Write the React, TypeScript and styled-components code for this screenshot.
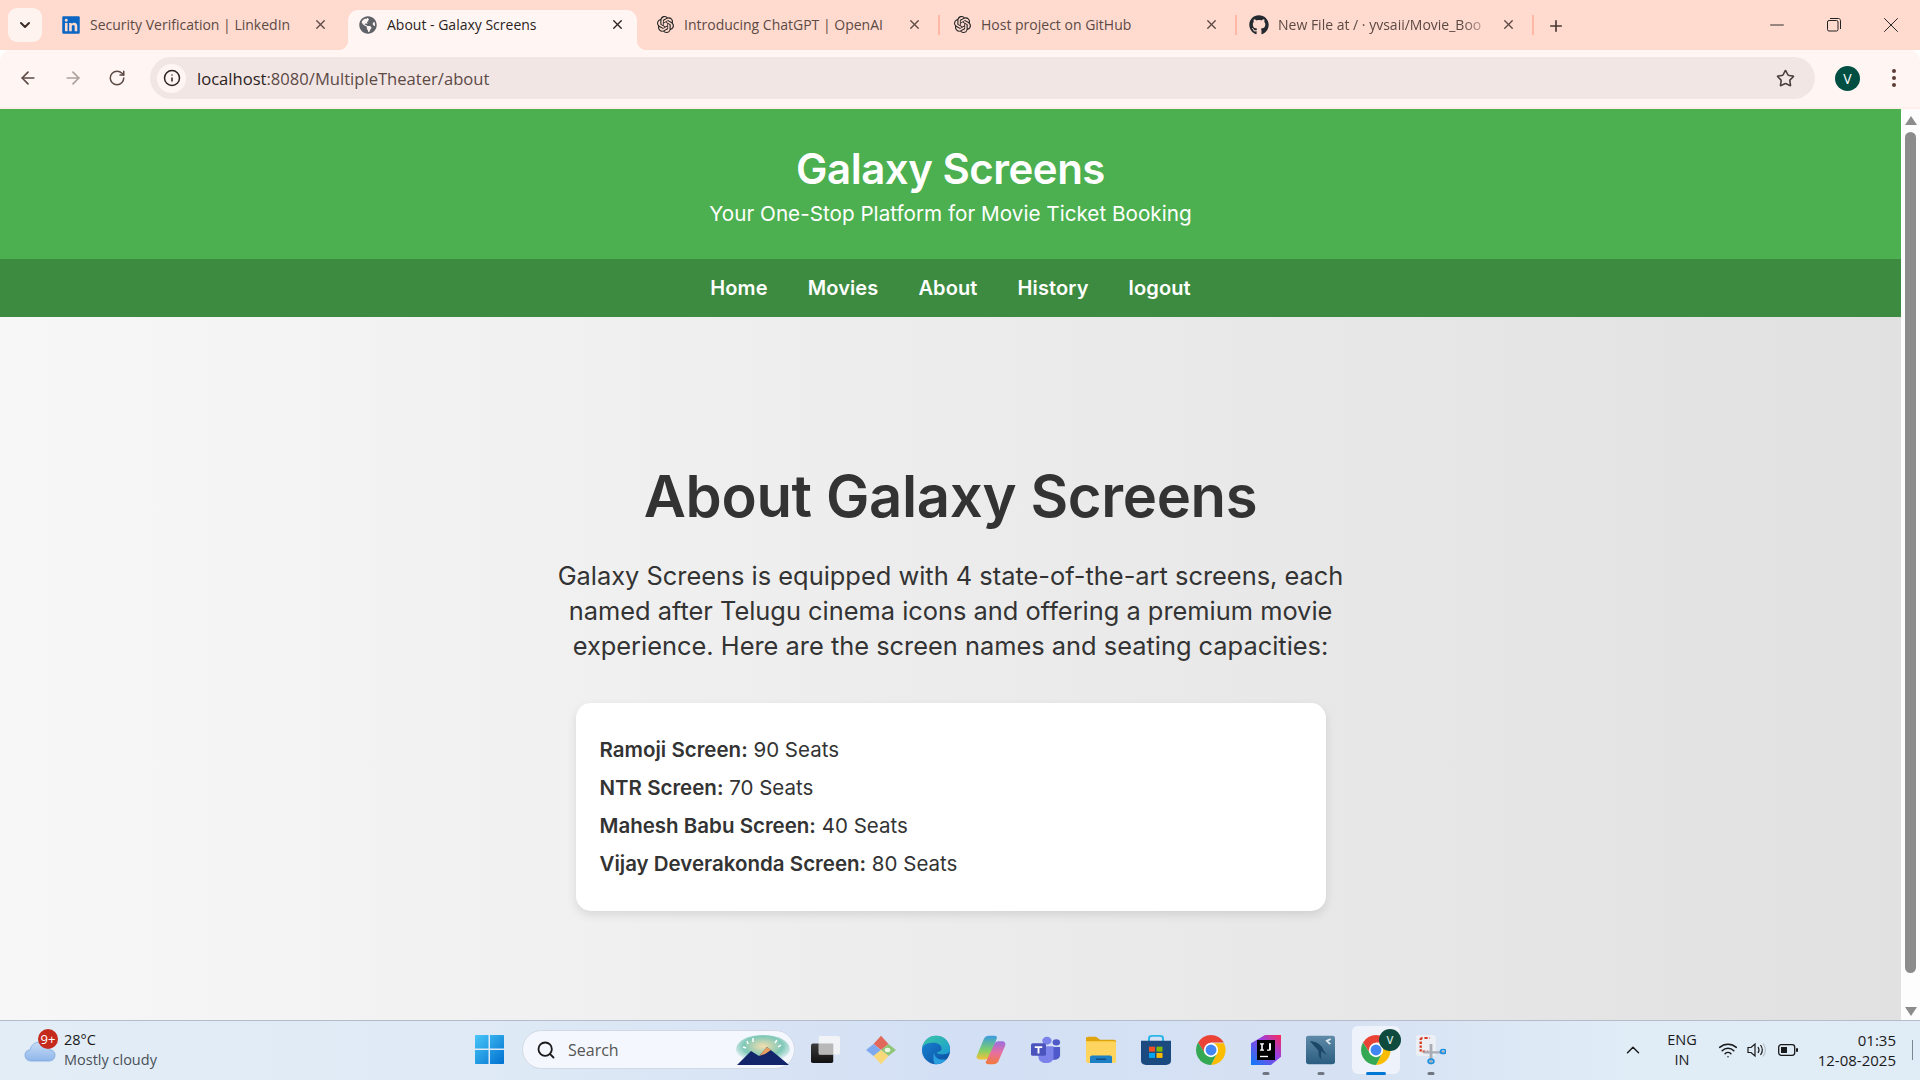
import React from "react";
import styled, { createGlobalStyle } from "styled-components";
import { ArrowLeft, ArrowRight, RotateCw, Info, X, Plus, Star, ChevronDown, ChevronUp, Search, Wifi, Minus } from "lucide-react";
import { FaGithub, FaLinkedin, FaGlobeAmericas } from "react-icons/fa";
import { SiOpenai } from "react-icons/si";

const GlobalStyle = createGlobalStyle`
  html, body { margin: 0; padding: 0; overflow: hidden; }
  * { box-sizing: border-box; }
`;
const chromeFont = `"Open Sans", "Noto Sans", sans-serif`;
const pageFont = `Inter, "Noto Sans", sans-serif`;

const Screen = styled.div`
  width: 1920px; height: 1080px; display: flex; flex-direction: column; overflow: hidden;
  font-family: ${chromeFont};
`;
const TabStrip = styled.div`
  height: 50px; background: #ffdacf; display: flex; align-items: flex-end; position: relative; padding-left: 8px;
`;
const CollapseButton = styled.div`
  width: 34px; height: 34px; margin-bottom: 8px; margin-right: 9px; border-radius: 9px; background: #fff3ef;
  display: flex; align-items: center; justify-content: center; color: #3c2a25;
`;
const Tab = styled.div<{ $active?: boolean }>`
  width: 289px; height: 40px; margin-right: 8px; position: relative; display: flex; align-items: center;
  padding-left: 10px; padding-bottom: 11px;
  border-radius: 10px 10px 0 0; color: ${(p) => (p.$active ? "#2b2321" : "#5c4a45")};
  background: ${(p) => (p.$active ? "#fff6f4" : "transparent")};
  ${(p) => !p.$active && `
    &::after { content: ""; position: absolute; right: -6px; top: 5px; width: 2px; height: 20px; background: #ffb8a4; }
  `}
  ${(p) => p.$active && `
    &::before, &::after { content: ""; position: absolute; bottom: 0; width: 10px; height: 10px; }
    &::before { left: -10px; background: radial-gradient(circle at 0 0, transparent 10px, #fff6f4 10.5px); }
    &::after { right: -10px; background: radial-gradient(circle at 100% 0, transparent 10px, #fff6f4 10.5px); }
  `}
`;
const FirstTab = styled(Tab)`
  &::after { display: none; }
`;
const Favicon = styled.span`
  width: 20px; height: 20px; display: flex; align-items: center; justify-content: center; flex: none; margin-right: 9px;
`;
const TabTitle = styled.span<{ $fade?: boolean }>`
  flex: 1; font-size: 14px; white-space: nowrap; min-width: 0;
  ${(p) => p.$fade && `-webkit-mask-image: linear-gradient(90deg,#000 85%,transparent);`}
`;
const TabClose = styled.span`
  width: 16px; height: 16px; margin-right: 12px; margin-left: 6px; flex: none; display: flex; align-items: center; justify-content: center;
`;
const NewTab = styled.span`
  width: 20px; margin-left: 10px; margin-bottom: 14px; height: 20px; display: flex; align-items: center; justify-content: center; color: #4a3833;
`;
const WindowControls = styled.div`
  margin-left: auto; display: flex; align-items: center; height: 50px; align-self: flex-start; padding-right: 1px;
`;
const WindowButton = styled.span`
  width: 57px; height: 50px; display: flex; align-items: center; justify-content: center; color: #222;
`;
const Toolbar = styled.div`
  height: 59px; background: #fff6f4; border-radius: 10px 10px 0 0; padding: 8px 0 9px 0; display: flex; align-items: center; border-bottom: 2px solid #ffeee9;
`;
const NavIcons = styled.div`
  display: flex; align-items: center; width: 150px; padding-left: 18px; gap: 25px; color: #5c4a45;
`;
const UrlBar = styled.div`
  width: 1665px; height: 42px; border-radius: 21px; background: #f2e6e5; display: flex; align-items: center; padding-left: 7px; padding-right: 20px;
`;
const InfoPill = styled.span`
  width: 29px; height: 29px; border-radius: 50%; background: #fff6f4; display: flex; align-items: center; justify-content: center; margin-right: 11px; color: #2b2321;
`;
const UrlText = styled.span`
  font-size: 16.6px; color: #2b2321; flex: 1;
  & > em { font-style: normal; color: #5c4a45; }
`;
const Avatar = styled.span`
  width: 25px; height: 25px; border-radius: 50%; background: #004f42; color: #fff; font-size: 14px; display: flex; align-items: center; justify-content: center; margin-left: 20px;
`;
const MenuDots = styled.span`
  display: flex; flex-direction: column; gap: 3px; margin-left: 32px;
  & > i { display: block; width: 4px; height: 4px; border-radius: 50%; background: #5c3c34; }
`;
const Viewport = styled.div`
  height: 912px; display: flex; border-bottom: 1px solid #b4bccb;
`;
const Content = styled.div`
  flex: 1; min-width: 0; display: flex; flex-direction: column;
  font-family: ${pageFont}; color: #333;
`;
const Header = styled.header`
  height: 150px; background: #4caf50; color: #fff; text-align: center; padding-top: 31px;
`;
const Title = styled.h1`
  margin: 0; font-size: 42px; line-height: 58px; font-weight: 600; letter-spacing: -0.5px;
`;
const Subtitle = styled.p`
  margin: 2px 0 0; font-size: 20.7px; line-height: 28px; font-weight: 400;
`;
const NavBar = styled.nav`
  height: 58px; background: #3d8b40; display: flex; align-items: center; justify-content: center; gap: 40px;
`;
const NavLink = styled.a`
  color: #fff; font-size: 20px; font-weight: 600; letter-spacing: 0.12px;
`;
const Main = styled.main`
  flex: 1; display: flex; flex-direction: column; align-items: center; padding-top: 146px;
  background: linear-gradient(90deg, #f7f7f7, #e1e1e1);
`;
const Heading = styled.h2`
  margin: 0; font-size: 58px; line-height: 67px; font-weight: 600; letter-spacing: -0.35px; color: #333;
`;
const Lead = styled.p`
  margin: 28px 0 0; width: 810px; text-align: center; font-size: 25.4px; line-height: 35px; font-weight: 400; color: #333;
`;
const Card = styled.div`
  margin-top: 40px; width: 750px; height: 208px; background: #fff; border-radius: 15px; padding: 28px 24px; box-shadow: 0 4px 10px rgba(0,0,0,.1);
`;
const Row = styled.div`
  font-size: 20.5px; line-height: 38px; color: #333;
  & > b { font-weight: 600; }
`;
const Scrollbar = styled.div`
  width: 19px; background: #fdfdfd; display: flex; flex-direction: column; align-items: center; padding: 7px 0 4px;
`;
const ScrollThumb = styled.div`
  width: 11px; flex: 1; margin: 7px 0 34px; background: #8c8c8c; border-radius: 6px;
`;
const Arrow = styled.div<{ $down?: boolean }>`
  width: 0; height: 0; border-left: 6px solid transparent; border-right: 6px solid transparent;
  ${(p) => (p.$down ? "border-top: 9px solid #8c8c8c;" : "border-bottom: 9px solid #8c8c8c;")}
`;
const Taskbar = styled.div`
  height: 59px; display: flex; align-items: center; padding-left: 24px; padding-bottom: 2px; font-family: ${chromeFont};
  background: linear-gradient(90deg, #e2edf6 0%, #dfeaf6 25%, #d3dff4 50%, #d6e2f3 70%, #e0ecf6 85%, #e0ecf6 100%);
`;
const Weather = styled.div`
  width: 451px; display: flex; align-items: center; gap: 8px; position: relative;
`;
const Badge = styled.span`
  position: absolute; left: 14px; top: -1px; width: 20px; height: 20px; border-radius: 50%; background: #c42b1c; color: #fff; font-size: 13px; display: flex; align-items: center; justify-content: center;
`;
const WeatherText = styled.div`
  font-size: 14.5px; line-height: 20px; color: #1a1a1a;
  & > span { display: block; color: #4a5058; }
`;
const SearchPill = styled.div`
  margin-left: 18px; margin-right: 3px; width: 273px; height: 39px; border-radius: 20px; background: #f4f7fd; border: 1px solid #d2d9e6; display: flex; align-items: center; padding-left: 13px; position: relative; color: #1a1a1a;
`;
const SearchLabel = styled.span`
  font-size: 16px; color: #555; margin-left: 12px; flex: 1;
`;
const TaskButton = styled.div<{ $active?: boolean; $running?: boolean }>`
  width: 55px; height: 48px; position: relative; display: flex; align-items: center; justify-content: center; border-radius: 6px;
  ${(p) => p.$active && `
    &::before { content: ""; position: absolute; left: 3.5px; right: 3.5px; top: 0; bottom: 0; background: #eef3fb; border-radius: 6px; }
  `}
  & > svg { position: relative; }
  ${(p) => (p.$running || p.$active) && `
    &::after { content: ""; position: absolute; left: 50%; bottom: -1px; height: 3px; border-radius: 2px; transform: translateX(-50%);
      width: ${p.$active ? "20px" : "7px"}; background: ${p.$active ? "#0078d4" : "#6f7681"}; }
  `}
`;
const ProfileBubble = styled.span`
  position: absolute; right: 2px; top: 3px; width: 22px; height: 22px; border-radius: 50%; background: #0e4a3e; color: #cfe3dc; font-size: 11px; font-weight: 600; display: flex; align-items: center; justify-content: center;
`;
const Tray = styled.div`
  margin-left: auto; display: flex; align-items: center; color: #1a1a1a; padding-right: 7px;
`;
const Lang = styled.div`
  width: 40px; font-size: 14.5px; line-height: 20px; text-align: center; margin-left: 18px; margin-right: 16px;
`;
const TrayIcons = styled.div`
  display: flex; align-items: center; gap: 9px;
`;
const Clock = styled.div`
  font-size: 15px; line-height: 20px; text-align: right; margin-left: 8px; width: 90px;
`;
const DesktopPeek = styled.span`
  width: 1px; height: 20px; background: #7d8694; margin-left: 16px;
`;

const ChromeIcon = () => (
  <svg width="30" height="30" viewBox="2 2 44 44">
    <path d="M43.05 13H24L15.34 29 4.95 13A22 22 0 0 1 43.05 13z" fill="#ea4335" />
    <path d="M24 46 32.66 29 24 14H43.05A22 22 0 0 1 24 46z" fill="#fbbc04" />
    <path d="M4.95 13 15.34 29H32.66L24 46A22 22 0 0 1 4.95 13z" fill="#34a853" />
    <circle cx="24" cy="24" r="10.500" fill="#fff" />
    <circle cx="24" cy="24" r="8" fill="#4285f4" />
  </svg>
);
const Icons = {
  TaskView: () => (
    <svg width="29" height="27" viewBox="0 0 30 32" preserveAspectRatio="none">
      <defs><linearGradient id="tv" x1="0" y1="0" x2="0" y2="1"><stop offset="0" stopColor="#3c3c3c" /><stop offset="1" stopColor="#111" /></linearGradient></defs>
      <rect x="0" y="9" width="23" height="23" rx="2" fill="url(#tv)" />
      <rect x="8" y="0" width="22" height="22" rx="2" fill="#f6f6f6" opacity=".85" />
      <rect x="8" y="9" width="15" height="13" fill="#b8b8b8" />
    </svg>
  ),
  Gem: () => (
    <svg width="30" height="30" viewBox="0 0 32 40" preserveAspectRatio="none">
      <path d="M16 1 24 12 16 20 8 12z" fill="#e2685c" />
      <path d="M24 12 32 20 24 28 16 20z" fill="#8fc678" />
      <path d="M8 12 16 20 8 28 0 20z" fill="#7fa9ee" />
      <path d="M16 20 24 28 16 39 8 28z" fill="#f8d878" />
      <circle cx="23" cy="20" r="3" fill="#eaf4e2" />
    </svg>
  ),
  Edge: () => (
    <svg width="30" height="30" viewBox="0 0 32 42" preserveAspectRatio="none">
      <defs>
        <linearGradient id="eg" x1="0" y1="0" x2="1" y2="1"><stop offset="0" stopColor="#3bc9a0" /><stop offset="1" stopColor="#1c9ad6" /></linearGradient>
        <linearGradient id="eb" x1="0" y1="0" x2="1" y2="1"><stop offset="0" stopColor="#1a86d8" /><stop offset="1" stopColor="#0c4e9e" /></linearGradient>
      </defs>
      <ellipse cx="16" cy="21" rx="15" ry="20" fill="url(#eb)" />
      <path d="M1 19C3 6 10 1 16 1c9 0 15 8 15 20 0 4-3 6-8 6-4 0-6-1-6-3 3 0 5-2 5-5 0-5-5-9-10-8-6 0-10 4-11 8z" fill="url(#eg)" />
      <path d="M14 24c0 7 5 12 13 10-3 5-7 7-11 7-2 0-4-7-2-17z" fill="#2a9fe0" />
    </svg>
  ),
  Copilot: () => (
    <svg width="30" height="30" viewBox="0 0 32 38" preserveAspectRatio="none">
      <defs>
        <linearGradient id="c1" x1="0" y1="0" x2="0" y2="1"><stop offset="0" stopColor="#3a9be0" /><stop offset=".6" stopColor="#7fcf6a" /><stop offset="1" stopColor="#f5c23a" /></linearGradient>
        <linearGradient id="c2" x1="0" y1="0" x2="0" y2="1"><stop offset="0" stopColor="#9a6fe0" /><stop offset=".5" stopColor="#e86fa0" /><stop offset="1" stopColor="#f27a3a" /></linearGradient>
      </defs>
      <path d="M14 1h6c2 0 3 2 2 4l-7 22c-1 2-3 4-5 4H4c-3 0-4-3-3-5L8 6c1-3 3-5 6-5z" fill="url(#c1)" />
      <path d="M24 8h4c3 0 4 3 3 6l-7 19c-1 3-3 4-6 4h-5c-3 0-3-3-2-4l8-20c1-3 3-5 5-5z" fill="url(#c2)" />
    </svg>
  ),
  Teams: () => (
    <svg width="30" height="27" viewBox="0 0 32 34" preserveAspectRatio="none">
      <circle cx="17" cy="6" r="5" fill="#7b83eb" /><circle cx="27" cy="8" r="4" fill="#5059c9" />
      <path d="M20 14h11v10c0 4-3 6-6 6h-5z" fill="#5059c9" />
      <path d="M8 13h16v14c0 4-3 7-8 7-4 0-8-3-8-7z" fill="#7b83eb" />
      <rect x="0" y="9" width="16" height="16" rx="2" fill="#4b53bc" />
      <path d="M4 13h8v2H9v7H7v-7H4z" fill="#fff" />
    </svg>
  ),
  Folder: () => (
    <svg width="30" height="27" viewBox="0 0 30 36" preserveAspectRatio="none">
      <path d="M0 3c0-1 1-2 2-2h8l4 4h14c1 0 2 1 2 2v6H0z" fill="#dfa40c" />
      <path d="M0 7h28c1 0 2 1 2 2v25c0 1-1 2-2 2H2c-1 0-2-1-2-2z" fill="#fdd45d" />
      <path d="M4 36v-8c0-1 1-2 2-2h18c1 0 2 1 2 2v8z" fill="#1d7fc4" />
      <rect x="10" y="30" width="10" height="2" fill="#0d4f86" />
    </svg>
  ),
  Store: () => (
    <svg width="30" height="30" viewBox="0 0 30 36" preserveAspectRatio="none">
      <path d="M8 8V4c0-2 1-3 3-3h8c2 0 3 1 3 3v4" fill="none" stroke="#29b6e8" strokeWidth="2" />
      <path d="M0 7h30v24c0 3-2 5-5 5H5c-3 0-5-2-5-5z" fill="#1b4a80" />
      <rect x="8" y="14" width="6" height="6" fill="#f25022" /><rect x="15.500" y="14" width="6" height="6" fill="#7fba00" />
      <rect x="8" y="21.500" width="6" height="6" fill="#00a4ef" /><rect x="15.500" y="21.500" width="6" height="6" fill="#ffb900" />
    </svg>
  ),
  IntelliJ: () => (
    <svg width="30" height="30" viewBox="0 0 30 36" preserveAspectRatio="none">
      <defs><linearGradient id="ij" x1="0" y1="1" x2="1" y2="0"><stop offset="0" stopColor="#087cfa" /><stop offset=".6" stopColor="#9b3fe0" /><stop offset="1" stopColor="#fe2857" /></linearGradient></defs>
      <path d="M0 10 14 0h16v26l-10 10H0z" fill="url(#ij)" />
      <rect x="6" y="6" width="18" height="24" fill="#000" />
      <path d="M9 10h4v1.500h-1.200v6H13V19H9v-1.500h1.200v-6H9zM16 10h4v7c0 1.500-1 2-2 2h-2v-1.500h2v-7.500h-2z" fill="#fff" />
      <rect x="9" y="25" width="8" height="1.600" fill="#fff" />
    </svg>
  ),
  MySql: () => (
    <svg width="29" height="30" viewBox="0 0 30 38" preserveAspectRatio="none">
      <defs><linearGradient id="ms" x1="0" y1="0" x2="0" y2="1"><stop offset="0" stopColor="#5f8aa8" /><stop offset="1" stopColor="#2b5d80" /></linearGradient></defs>
      <rect x="0" y="1" width="30" height="36" rx="3" fill="url(#ms)" />
      <path d="M4 8c6 0 10 3 13 8 1 3 2 6 5 9-3-1-5-3-6-5 0 4-1 8 0 11-3-3-3-7-3-11C10 16 7 12 4 8z" fill="#1d4766" />
      <path d="M20 7l5-3 1 2-3 2 3 3-2 1z" fill="#dfe8ee" />
    </svg>
  ),
  Snip: () => (
    <svg width="30" height="30" viewBox="0 0 32 40" preserveAspectRatio="none">
      <rect x="0" y="0" width="21" height="28" rx="3" fill="#eceff4" />
      <path d="M5 12V6c0-1 1-2 2-2h8" fill="none" stroke="#d83b20" strokeWidth="2.500" strokeDasharray="3.500 2" />
      <path d="M5 14v8h8" fill="none" stroke="#d83b20" strokeWidth="2.500" strokeDasharray="3 2" />
      <path d="M16 12v27M8 23h24" stroke="#a8adb5" strokeWidth="3" />
      <circle cx="16" cy="35" r="3" fill="none" stroke="#1b8fe0" strokeWidth="2" />
      <circle cx="29" cy="22" r="2.800" fill="none" stroke="#1b8fe0" strokeWidth="2" />
    </svg>
  ),
};
const WinLogo = () => (
  <svg width="29" height="29" viewBox="0 0 29 29" style={{ flex: "none" }}>
    <defs><linearGradient id="wl" x1="0" y1="0" x2="1" y2="1"><stop offset="0" stopColor="#48c6f7" /><stop offset="1" stopColor="#0070d0" /></linearGradient></defs>
    <path d="M0 1c0-.6.4-1 1-1h12.500v13.500H0zM15 0h13c.6 0 1 .4 1 1v12.500H15zM0 15h13.500v14H1c-.6 0-1-.4-1-1zM15 15h14v13c0 .6-.4 1-1 1H15z" fill="url(#wl)" />
  </svg>
);
const SearchArt = () => (
  <svg width="56" height="30" viewBox="0 0 56 30" style={{ marginRight: 3 }}>
    <defs>
      <radialGradient id="sk" cx=".5" cy=".4" r=".6"><stop offset="0" stopColor="#f3dfae" /><stop offset=".6" stopColor="#7ec8b8" /><stop offset="1" stopColor="#f4f7fd" /></radialGradient>
    </defs>
    <ellipse cx="28" cy="14" rx="27" ry="14" fill="url(#sk)" />
    <path d="M2 30 16 16l8 5 8-9 10 8 12 10z" fill="#12246a" />
    <path d="M24 21l8-9 4 3-6 4z" fill="#e8a060" />
    <path d="M12 6l1 3M18 3v4M8 12l3 1M42 5l-2 3M46 10l-3 2" stroke="#fff" strokeWidth="1.500" />
  </svg>
);
const Cloud = () => (
  <svg width="32" height="24" viewBox="0 0 32 24">
    <defs><linearGradient id="cl" x1="0" y1="0" x2="0" y2="1"><stop offset="0" stopColor="#c8dcf6" /><stop offset="1" stopColor="#8fb6ea" /></linearGradient></defs>
    <path d="M20 4c2 0 4 1 4 3l-2 2z" fill="#f08a24" />
    <path d="M7 23c-4 0-6-3-6-6s2-5 5-5c1-5 5-8 10-8 5 0 9 3 10 8 3 0 5 2 5 5s-2 6-6 6z" fill="url(#cl)" stroke="#7ea8de" strokeWidth=".8" />
  </svg>
);
const Speaker = () => (
  <svg width="22" height="16" viewBox="0 0 22 16" fill="none" stroke="#1a1a1a" strokeWidth="1.200">
    <path d="M1 5.500h3l4-3.500v12l-4-3.500H1z" /><path d="M11 5c1.200 1.800 1.200 4.200 0 6M13.500 3c2.200 3 2.200 7 0 10" /><path d="M16 1.500c3 4 3 9 0 13" stroke="#b9c2cc" />
  </svg>
);
const Battery = () => (
  <svg width="20" height="14" viewBox="0 0 20 14">
    <rect x=".7" y="1.700" width="16" height="10.600" rx="2.500" fill="none" stroke="#1a1a1a" strokeWidth="1.300" />
    <rect x="3" y="4" width="6" height="6" fill="#1a1a1a" /><rect x="18" y="5" width="2" height="4" rx="1" fill="#1a1a1a" />
  </svg>
);
const RestoreIcon = () => (
  <svg width="14" height="14" viewBox="0 0 14 14" fill="none" stroke="#222" strokeWidth="1">
    <rect x=".5" y="2.500" width="10.500" height="10.500" rx="1.500" /><path d="M3 .5h8.500c1 0 2 1 2 2V11" />
  </svg>
);

const tabs = [
  { title: "Security Verification | LinkedIn", icon: <FaLinkedin size={20} color="#0a66c2" /> },
  { title: "About - Galaxy Screens", icon: <FaGlobeAmericas size={18} color="#5f6368" />, active: true },
  { title: "Introducing ChatGPT | OpenAI", icon: <SiOpenai size={17} color="#222" /> },
  { title: "Host project on GitHub", icon: <SiOpenai size={17} color="#222" /> },
  { title: "New File at / · yvsaii/Movie_Boo", icon: <FaGithub size={20} color="#24292f" />, fade: true },
];
const screens = [
  ["Ramoji Screen:", "90 Seats"],
  ["NTR Screen:", "70 Seats"],
  ["Mahesh Babu Screen:", "40 Seats"],
  ["Vijay Deverakonda Screen:", "80 Seats"],
];

export default function App() {
  return (
    <Screen>
      <GlobalStyle />
      <TabStrip>
        <CollapseButton><ChevronDown size={16} strokeWidth={3} /></CollapseButton>
        {tabs.map((t, i) => {
          const T = i === 0 ? FirstTab : Tab;
          return (
            <T key={t.title} $active={t.active}>
              <Favicon>{t.icon}</Favicon>
              <TabTitle $fade={t.fade}>{t.title}</TabTitle>
              <TabClose><X size={15} strokeWidth={2.2} /></TabClose>
            </T>
          );
        })}
        <NewTab><Plus size={18} strokeWidth={2.2} /></NewTab>
        <WindowControls>
          <WindowButton><Minus size={22} strokeWidth={1} /></WindowButton>
          <WindowButton><RestoreIcon /></WindowButton>
          <WindowButton><X size={26} strokeWidth={0.9} /></WindowButton>
        </WindowControls>
      </TabStrip>
      <Toolbar>
        <NavIcons>
          <ArrowLeft size={20} />
          <ArrowRight size={20} opacity={0.5} />
          <RotateCw size={18} />
        </NavIcons>
        <UrlBar>
          <InfoPill><Info size={18} strokeWidth={2} /></InfoPill>
          <UrlText>localhost<em>:8080/MultipleTheater/about</em></UrlText>
          <Star size={19} color="#4a3e3b" strokeWidth={2} />
        </UrlBar>
        <Avatar>V</Avatar>
        <MenuDots><i /><i /><i /></MenuDots>
      </Toolbar>
      <Viewport>
        <Content>
          <Header>
            <Title>Galaxy Screens</Title>
            <Subtitle>Your One-Stop Platform for Movie Ticket Booking</Subtitle>
          </Header>
          <NavBar>
            {["Home", "Movies", "About", "History", "logout"].map((n) => <NavLink key={n}>{n}</NavLink>)}
          </NavBar>
          <Main>
            <Heading>About Galaxy Screens</Heading>
            <Lead>Galaxy Screens is equipped with 4 state-of-the-art screens, each named after Telugu cinema icons and offering a premium movie experience. Here are the screen names and seating capacities:</Lead>
            <Card>
              {screens.map(([a, b]) => <Row key={a}><b>{a}</b> {b}</Row>)}
            </Card>
          </Main>
        </Content>
        <Scrollbar>
          <Arrow />
          <ScrollThumb />
          <Arrow $down />
        </Scrollbar>
      </Viewport>
      <Taskbar>
        <Weather>
          <Cloud />
          <Badge>9+</Badge>
          <WeatherText>28°C<span>Mostly cloudy</span></WeatherText>
        </Weather>
        <WinLogo />
        <SearchPill>
          <Search size={20} strokeWidth={2.2} />
          <SearchLabel>Search</SearchLabel>
          <SearchArt />
        </SearchPill>
        <TaskButton><Icons.TaskView /></TaskButton>
        <TaskButton><Icons.Gem /></TaskButton>
        <TaskButton><Icons.Edge /></TaskButton>
        <TaskButton><Icons.Copilot /></TaskButton>
        <TaskButton><Icons.Teams /></TaskButton>
        <TaskButton><Icons.Folder /></TaskButton>
        <TaskButton><Icons.Store /></TaskButton>
        <TaskButton><ChromeIcon /></TaskButton>
        <TaskButton $running><Icons.IntelliJ /></TaskButton>
        <TaskButton $running><Icons.MySql /></TaskButton>
        <TaskButton $active><ChromeIcon /><ProfileBubble>V</ProfileBubble></TaskButton>
        <TaskButton $running><Icons.Snip /></TaskButton>
        <Tray>
          <ChevronUp size={22} strokeWidth={1.6} />
          <Lang>ENG<br />IN</Lang>
          <TrayIcons>
            <Wifi size={20} strokeWidth={1.8} />
            <Speaker />
            <Battery />
          </TrayIcons>
          <Clock>01:35<br />12-08-2025</Clock>
          <DesktopPeek />
        </Tray>
      </Taskbar>
    </Screen>
  );
}
